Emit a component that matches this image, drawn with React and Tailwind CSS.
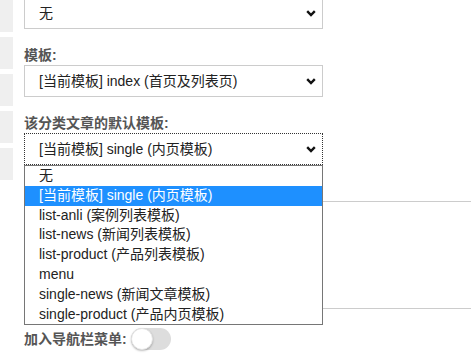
import React from "react";

const OPTIONS = [
  "无",
  "[当前模板] single (内页模板)",
  "list-anli (案例列表模板)",
  "list-news (新闻列表模板)",
  "list-product (产品列表模板)",
  "menu",
  "single-news (新闻文章模板)",
  "single-product (产品内页模板)",
];

function Chevron() {
  return (
    <svg width="10" height="7" viewBox="0 0 10 7" className="shrink-0">
      <path d="M1.2 1.2 L5 5 L8.8 1.2" fill="none" stroke="#111" strokeWidth="2.4" />
    </svg>
  );
}

function FakeSelect({ value, focused }) {
  return (
    <div
      className={`h-[32px] w-[299px] flex items-center justify-between pl-[14px] pr-[6px] bg-white text-[14px] text-[#222] ${
        focused ? "border border-dotted border-[#333]" : "border border-[#cccccc]"
      }`}
    >
      <span>{value}</span>
      <Chevron />
    </div>
  );
}

function Label({ children }) {
  return <div className="mt-[17px] h-[19px] leading-[19px] text-[14px] font-bold text-[#555]">{children}</div>;
}

export default function App() {
  return (
    <div
      className="relative w-[471px] h-[356px] overflow-hidden bg-white flex"
      style={{ fontFamily: "'Liberation Sans', 'Noto Sans CJK SC', sans-serif" }}
    >
      {/* side blocks */}
      <div className="w-[13px] flex flex-col gap-[5px] shrink-0">
        {[0, 1, 2, 3, 4].map(i => (
          <div key={i} className="h-[32px] bg-[#efefef]" />
        ))}
      </div>

      <div className="ml-[11px] flex-1 flex flex-col">
        <div className="mt-[-3px]">
          <FakeSelect value="无" />
        </div>
        <Label>模板:</Label>
        <FakeSelect value="[当前模板] index (首页及列表页)" />
        <Label>该分类文章的默认模板:</Label>
        <FakeSelect value="[当前模板] single (内页模板)" focused />

        <div className="mt-[36px] h-px bg-[#cccccc]" />
        <div className="mt-[106px] h-px bg-[#cccccc]" />

        <div className="mt-[19px] flex items-center gap-[4px]">
          <span className="text-[14px] font-bold text-[#555]">加入导航栏菜单:</span>
          <div className="relative w-[40px] h-[22px] rounded-full bg-[#dddddd]">
            <div className="absolute left-0 top-0 w-[22px] h-[22px] rounded-full bg-white border border-[#e4e4e4] shadow-[0_1px_2px_rgba(0,0,0,0.25)]" />
          </div>
        </div>
      </div>

      {/* open dropdown list */}
      <div className="absolute left-[24px] top-[165px] w-[299px] border border-[#767676] bg-white">
        {OPTIONS.map((o, i) => (
          <div
            key={o}
            className={`h-[19.8px] leading-[19.8px] pl-[14px] text-[14px] ${
              i === 1 ? "bg-[#1e90ff] text-white" : "text-[#222]"
            }`}
          >
            {o}
          </div>
        ))}
      </div>
    </div>
  );
}
